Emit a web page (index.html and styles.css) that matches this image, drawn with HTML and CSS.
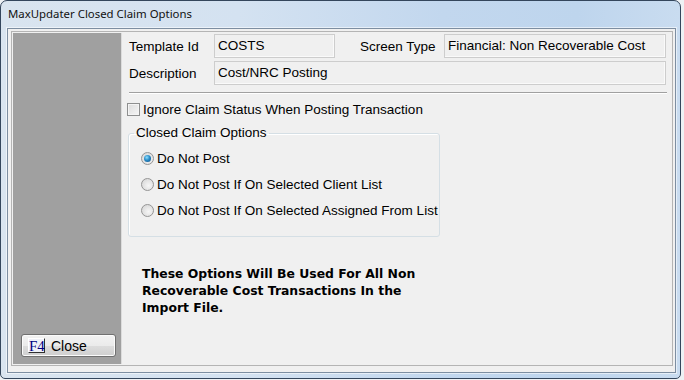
FILE: index.html
```html
<!DOCTYPE html>
<html lang="en">
<head>
  <meta charset="UTF-8">
  <title>MaxUpdater Closed Claim Options</title>
  <link rel="stylesheet" href="styles.css">
</head>
<body>
  <div class="window">
    <div class="titlebar">MaxUpdater Closed Claim Options</div>
    <div class="client">
      <div class="panel">
        <div class="sidebar">
          <button class="close-btn"><span class="key">F4</span>Close</button>
        </div>
        <div class="main">
          <div class="row">
            <span class="label">Template Id</span>
            <span class="field field-id">COSTS</span>
            <span class="label label-type">Screen Type</span>
            <span class="field field-type">Financial: Non Recoverable Cost</span>
          </div>
          <div class="row row-desc">
            <span class="label">Description</span>
            <span class="field field-desc">Cost/NRC Posting</span>
          </div>
          <div class="sep"></div>
          <label class="check"><span class="box"></span>Ignore Claim Status When Posting Transaction</label>
          <fieldset class="group">
            <legend>Closed Claim Options</legend>
            <div class="radio"><span class="dot checked"></span>Do Not Post</div>
            <div class="radio"><span class="dot"></span>Do Not Post If On Selected Client List</div>
            <div class="radio"><span class="dot"></span>Do Not Post If On Selected Assigned From List</div>
          </fieldset>
          <p class="note">These Options Will Be Used For All Non<br>Recoverable Cost Transactions In the<br>Import File.</p>
        </div>
      </div>
    </div>
  </div>
</body>
</html>
```

FILE: styles.css
```css
body {
  margin: 0;
  background: #eef1f4;
  font-family: 'Liberation Sans', Arial, sans-serif;
  font-size: 13.5px;
  color: #000;
}

.window {
  width: 681px;
  height: 379px;
  box-sizing: border-box;
  border: 1px solid #34465c;
  border-radius: 7px 7px 5px 5px;
  background: linear-gradient(to right, #d9e4ef, #d4e2f1 35%, #c2d7ee 65%, #bed5ed 85%, #c9dcf0);
  padding: 0 4px 6px 6px;
}

.titlebar {
  height: 27px;
  line-height: 26px;
  padding-left: 1px;
  font-family: 'Noto Sans', 'Open Sans', sans-serif;
  font-size: 11.4px;
  color: #111;
}

.client {
  height: 345px;
  box-sizing: border-box;
  border: 1px solid #7d8ea1;
  background: #f0f0f0;
  padding: 2px 2px 6px 3px;
  box-shadow: 0 0 0 1px rgba(255,255,255,0.55);
}

.panel {
  height: 100%;
  box-sizing: border-box;
  border: 1px solid #b4b4b4;
  padding: 1px;
  display: flex;
}

.sidebar {
  width: 109px;
  flex-shrink: 0;
  background: #a0a0a0;
  border-right: 1px solid #dcdcdc;
  display: flex;
  flex-direction: column;
  justify-content: flex-end;
  padding: 0 5px 7px 8px;
  box-sizing: border-box;
}

.close-btn {
  height: 23px;
  width: 95px;
  border: 1px solid #707070;
  border-radius: 3px;
  background: linear-gradient(#f2f2f2, #ebebeb 50%, #dddddd 51%, #cfcfcf);
  box-shadow: inset 0 0 0 1px #fbfbfb;
  padding: 0 0 0 6px;
  display: flex;
  align-items: center;
  gap: 6px;
  font-family: 'Liberation Sans', Arial, sans-serif;
  font-size: 14px;
  color: #000;
}

.key {
  width: 17px;
  height: 15px;
  line-height: 14px;
  box-sizing: border-box;
  border-right: 1px solid #303030;
  border-bottom: 1px solid #303030;
  border-top: 1px solid #fff;
  border-left: 1px solid #fff;
  background: #eef0f8;
  font-family: 'Liberation Serif', 'Times New Roman', serif;
  font-size: 15px;
  color: #000080;
  text-align: center;
}

.main {
  flex: 1;
  padding: 1px 4px 0 7px;
}

.row {
  display: flex;
  align-items: center;
  height: 24px;
}

.row-desc {
  margin-top: 3px;
}

.label {
  width: 85px;
  flex-shrink: 0;
}

.label-type {
  width: 84px;
  margin-left: 25px;
}

.field {
  height: 24px;
  line-height: 22px;
  box-sizing: border-box;
  border: 1px solid #cdcdcd;
  box-shadow: inset -1px -1px 0 #fafafa;
  padding-left: 3px;
  white-space: nowrap;
}

.field-id {
  width: 121px;
}

.field-type {
  width: 222px;
}

.field-desc {
  width: 452px;
}

.sep {
  margin: 7px 0 0 0;
  border-top: 1px solid #a0a0a0;
  border-bottom: 1px solid #fff;
}

.check {
  display: flex;
  align-items: center;
  height: 16px;
  margin: 7px 0 0 -2px;
  gap: 3px;
}

.box {
  width: 13px;
  height: 13px;
  box-sizing: border-box;
  border: 1px solid #8e8f8f;
  background: linear-gradient(135deg, #dcdcdc, #f6f6f6);
  box-shadow: inset 0 0 0 1px #f4f4f4;
}

.group {
  width: 312px;
  min-inline-size: 0;
  box-sizing: border-box;
  margin: 8px 0 0 -1px;
  padding: 9px 0 18px 12px;
  border: 1px solid #d5dfe5;
  border-radius: 3px;
  box-shadow: inset 1px 1px 0 #fff;
}

.group legend {
  margin-left: -7px;
  padding: 0 2px;
  line-height: 16px;
}

.radio {
  display: flex;
  align-items: center;
  height: 16px;
  gap: 3px;
  white-space: nowrap;
}

.radio + .radio {
  margin-top: 10px;
}

.dot {
  width: 13px;
  height: 13px;
  box-sizing: border-box;
  border-radius: 50%;
  border: 1px solid #959595;
  background: radial-gradient(circle at 60% 60%, #f6f6f6, #d2d2d2);
  display: flex;
  align-items: center;
  justify-content: center;
}

.dot.checked::after {
  content: '';
  width: 7px;
  height: 7px;
  border-radius: 50%;
  background: radial-gradient(circle at 40% 35%, #8ee0ff, #2a8cc8 45%, #0c4a80);
}

.note {
  margin: 28px 0 0 13px;
  font-family: 'DejaVu Sans', Verdana, sans-serif;
  font-size: 12.4px;
  font-weight: bold;
  line-height: 17px;
}
```
